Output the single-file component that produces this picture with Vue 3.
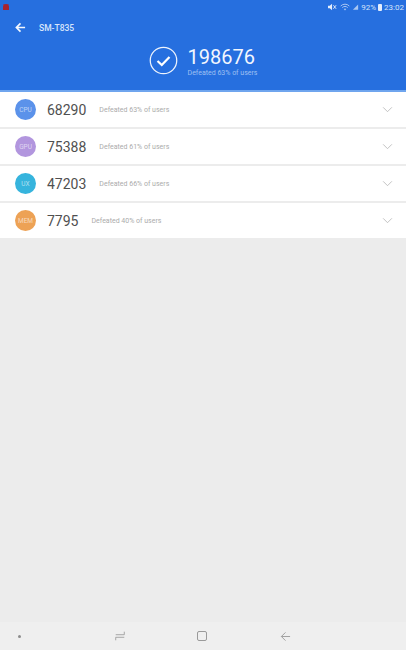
<template>
  <div class="screen">
    <header class="header">
      <div class="status-bar">
        <svg class="notif" viewBox="0 0 8 8" width="8" height="8">
          <path fill="#a8232f" d="M1 7V4a3 3 0 0 1 6 0v3z" />
          <path fill="#a8232f" d="M1.5 1 3 2.5M6.500 1 5 2.500" stroke="#a8232f" stroke-width=".8" />
        </svg>
        <div class="status-right">
          <svg viewBox="0 0 10 8" width="9" height="8">
            <path fill="#e4edfb" d="M0 2.500h2L4.500 .5v7L2 5.500H0z" />
            <path stroke="#e4edfb" stroke-width="1" d="M6 2l3 4M9 2 6 6" />
          </svg>
          <svg class="wifi" viewBox="0 0 10 8" width="10" height="8">
            <path fill="none" stroke="#a9c6f2" stroke-width="1" d="M.7 3a6 6 0 0 1 8.600 0M2.300 4.600a3.700 3.700 0 0 1 5.400 0" />
            <path fill="#a9c6f2" d="M5 7.500 3.700 6a2 2 0 0 1 2.600 0z" />
          </svg>
          <svg class="signal" viewBox="0 0 8 8" width="7" height="8">
            <path fill="#a9c6f2" d="M7 1v6H1z" />
          </svg>
          <span class="status-text">92%</span>
          <span class="battery"></span>
          <span class="status-text">23:02</span>
        </div>
      </div>
      <div class="toolbar">
        <svg viewBox="0 0 12 12" width="11" height="11">
          <path fill="none" stroke="#f4f8fe" stroke-width="1.800" d="M11 6H2M6 1.500 1.500 6 6 10.500" />
        </svg>
        <span class="device">SM-T835</span>
      </div>
      <div class="total">
        <svg viewBox="0 0 30 30" width="29" height="29">
          <circle cx="15" cy="15" r="13.700" fill="none" stroke="#eef4fd" stroke-width="1.300" />
          <path fill="none" stroke="#fff" stroke-width="2.300" d="m8.800 15.500 4.400 4.200 8-8.400" />
        </svg>
        <div class="total-text">
          <div class="total-score">198676</div>
          <div class="total-note">Defeated 63% of users</div>
        </div>
      </div>
    </header>

    <div class="rows">
      <div v-for="row in rows" :key="row.label" class="row">
        <span class="badge" :style="{ background: row.color }">{{ row.label }}</span>
        <span class="score">{{ row.score }}</span>
        <span class="note">Defeated {{ row.percent }}% of users</span>
        <svg class="chevron" viewBox="0 0 12 8" width="11" height="7">
          <path fill="none" stroke="#b9b9b9" stroke-width="1" d="m1 1.500 5 5 5-5" />
        </svg>
      </div>
    </div>

    <div class="spacer"></div>

    <nav class="nav-bar">
      <span class="dot"></span>
      <svg class="recents" viewBox="0 0 14 12" width="12" height="12">
        <path fill="none" stroke="#9a9a9a" stroke-width="1" d="M12 1v3.500H2M2 11V7.500h10" />
      </svg>
      <span class="home"></span>
      <svg class="back" viewBox="0 0 12 12" width="11" height="11">
        <path fill="none" stroke="#9a9a9a" stroke-width="1" d="M11 6H1.500M6 1.500 1.500 6 6 10.500" />
      </svg>
    </nav>
  </div>
</template>

<script setup>
const rows = [
  { label: 'CPU', score: 68290, percent: 63, color: '#5b92ea' },
  { label: 'GPU', score: 75388, percent: 61, color: '#b296de' },
  { label: 'UX', score: 47203, percent: 66, color: '#36b4dd' },
  { label: 'MEM', score: 7795, percent: 40, color: '#eda255' }
]
</script>

<style>
body {
  margin: 0;
}
</style>

<style scoped>
.screen {
  width: 406px;
  height: 650px;
  display: flex;
  flex-direction: column;
  background: #ececec;
  font-family: Roboto, "Liberation Sans", sans-serif;
  overflow: hidden;
}

.header {
  height: 90px;
  background: #266fdf;
  border-bottom: 2px solid #6fa5ee;
  color: #fff;
}

.status-bar {
  height: 14px;
  display: flex;
  align-items: center;
  justify-content: space-between;
  padding: 0 2px 0 2px;
}

.status-right {
  display: flex;
  align-items: center;
  gap: 2px;
}

.status-text {
  font-size: 8px;
  color: #d5e3fa;
}

.wifi {
  margin-left: 1px;
}

.battery {
  width: 4px;
  height: 7px;
  background: #e4edfb;
  border-radius: 1px;
}

.toolbar {
  height: 19px;
  display: flex;
  align-items: center;
  gap: 13px;
  margin-top: 3px;
  padding: 1px 0 0 15px;
}

.device {
  font-size: 8.500px;
  font-weight: 500;
  color: #d8e6fb;
}

.total {
  display: flex;
  align-items: center;
  justify-content: center;
  gap: 10px;
  margin-top: 6px;
}

.total-text {
  margin-top: 2px;
}

.total-score {
  font-size: 20px;
  line-height: 24px;
  color: #f2f6fe;
}

.total-note {
  font-size: 7px;
  line-height: 8px;
  color: #9fc0f2;
}

.rows {
  display: flex;
  flex-direction: column;
  gap: 2px;
}

.row {
  height: 35px;
  display: flex;
  align-items: center;
  background: #fff;
  padding-left: 15px;
}

.badge {
  width: 21px;
  height: 21px;
  border-radius: 50%;
  display: flex;
  align-items: center;
  justify-content: center;
  font-size: 6.500px;
  color: rgba(255, 255, 255, 0.6);
  flex: none;
}

.score {
  margin-left: 11px;
  font-size: 14px;
  color: #505050;
}

.note {
  margin-left: 13px;
  font-size: 7px;
  color: #ababab;
}

.chevron {
  margin-left: auto;
  margin-right: 13px;
}

.spacer {
  flex: 1;
}

.nav-bar {
  height: 28px;
  display: flex;
  align-items: center;
  padding-left: 18px;
  background: #efefef;
}

.dot {
  width: 3px;
  height: 3px;
  border-radius: 50%;
  background: #8c8c8c;
}

.recents {
  margin-left: 93px;
}

.home {
  width: 8px;
  height: 8px;
  margin-left: 71px;
  border: 1px solid #9a9a9a;
  border-radius: 2px;
}

.back {
  margin-left: 73px;
}
</style>
